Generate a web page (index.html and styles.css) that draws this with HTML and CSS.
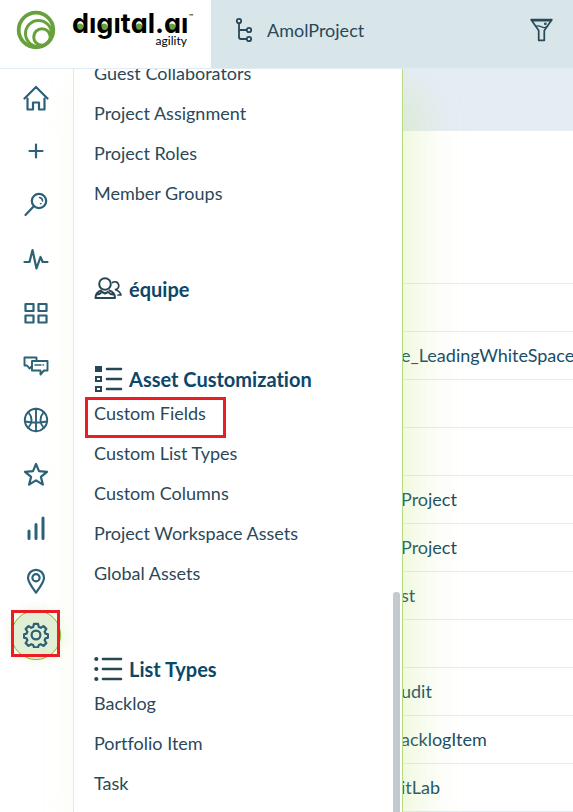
FILE: index.html
```html
<!DOCTYPE html>
<html lang="en">
<head>
<meta charset="utf-8">
<title>Digital.ai Agility</title>
<meta name="viewport" content="width=device-width, initial-scale=1">
<link rel="stylesheet" href="styles.css">
</head>
<body>
<header class="topbar">
  <a class="brand" href="#">
    <svg class="brand-mark" viewBox="0 0 40 40" width="40" height="40" fill="none" stroke="#68a13c" aria-hidden="true">
      <circle cx="20" cy="20" r="17.3" stroke-width="3.8"/>
      <circle cx="22.5" cy="23.5" r="13" stroke-width="3"/>
      <circle cx="26" cy="27" r="8.300" stroke-width="3"/>
    </svg>
    <span class="brand-name">
      <span class="word"><b>d</b>ı<b>g</b>ıt<b>a</b>l.<b>a</b>ı<small>™</small></span>
      <span class="product">agility</span>
    </span>
  </a>
  <div class="projectbar">
    <a class="project" href="#">
      <svg viewBox="0 0 18 26" width="18" height="26" fill="none" stroke="currentColor" stroke-width="1.8" aria-hidden="true">
        <circle cx="4" cy="4" r="2.2"/><circle cx="14" cy="13" r="2.2"/><circle cx="14" cy="22" r="2.2"/>
        <path d="M4 6.2V20q0 2 2 2h5.8M4 13h7.8"/>
      </svg>
      <span>AmolProject</span>
    </a>
    <button class="filter" type="button" aria-label="Filter">
      <svg viewBox="0 0 24 24" width="23" height="24" fill="none" stroke="currentColor" stroke-width="1.8" stroke-linejoin="round" aria-hidden="true">
        <path d="M1.200 1.200h21.600L14.900 12.500v10.300H9.100V12.500zM2 2.300h20"/><path d="M5.500 8.200q3-1 6.500.6t6.500-.6" stroke-width="1.300"/><circle cx="16" cy="5.600" r=".6"/>
      </svg>
    </button>
  </div>
</header>

<div class="workspace">
  <nav class="rail" aria-label="Main">
    <div class="rail-group">
      <button type="button" aria-label="Home"><svg viewBox="0 0 26 26"><path d="M1.500 13.500 13 2l11.500 11.500M4.500 13.500V24.500h5.500v-7h6v7h5.500V13.500"/></svg></button>
    </div>
    <div class="rail-group">
      <button type="button" aria-label="Add"><svg viewBox="0 0 26 26"><path d="M13 6.500v13M6.500 13h13"/></svg></button>
      <button type="button" aria-label="Search"><svg viewBox="0 0 26 26"><circle cx="16" cy="9" r="7.200"/><path d="M11 14 2.500 23"/><path d="M16.500 5.500q3 .5 3 3.500M17.500 11.700h.4" stroke-width="1.500"/></svg></button>
      <button type="button" aria-label="Activity"><svg viewBox="0 0 26 26"><path d="M1.500 16h5L9.500 4l4 18.500L17.500 11l2.200 5h4.800"/></svg></button>
      <button type="button" aria-label="Dashboards"><svg viewBox="0 0 26 26"><path d="M2.500 4h8v7h-8zM15.500 4h8v7h-8zM2.500 15.500h8v7h-8zM15.500 15.500h8v7h-8z"/></svg></button>
      <button type="button" aria-label="Conversations"><svg viewBox="0 0 26 26"><g stroke-width="1.900"><path d="M8.500 12.500l-2 2-2.500-3H1.500V3.500h12v3"/><path d="M9 7h15.500v9.500h-3.500L17.500 20.500v-4H9z"/><path d="M12 11h6M20 11h.5" stroke-width="1.400"/></g></svg></button>
    </div>
    <div class="rail-group">
      <button type="button" aria-label="Sprints"><svg viewBox="0 0 26 26"><g stroke-width="1.900"><circle cx="13" cy="13" r="11.200"/><path d="M13 1.800v22.400M2 14.500q11 2 22 0M5.300 5q6.500 8 0 16M20.700 5q-6.500 8 0 16"/></g></svg></button>
      <button type="button" aria-label="Favorites"><svg viewBox="0 0 26 26"><path d="m13 3 3 7.200 8 .6-6.100 5.100 2 7.700L13 19.400l-6.900 4.200 2-7.700L2 10.800l8-.6z"/></svg></button>
      <button type="button" aria-label="Reports"><svg viewBox="0 0 26 26"><path d="M6 16v7.500M13 9.500v14M20 3v20.500" stroke-width="3"/></svg></button>
    </div>
    <div class="rail-group">
      <button type="button" aria-label="Locations"><svg viewBox="0 0 26 26"><path d="M13 24.500C9 19 5 14.500 5 9.800a8 8 0 0 1 16 0c0 4.700-4 9.200-8 14.700z"/><circle cx="13" cy="9.800" r="3.600"/></svg></button>
      <button class="active" type="button" aria-label="Settings"><svg viewBox="0 0 26 26"><circle cx="13" cy="13" r="4.400"/><path d="M11 1.800h4l.8 3.200 1.900.8 2.800-1.700 2.800 2.800-1.700 2.800.8 1.900 2.600.7v3.400l-2.600.7-.8 1.900 1.700 2.800-2.800 2.800-2.800-1.700-1.900.8-.8 2.400h-4l-.8-2.400-1.900-.8-2.800 1.700-2.800-2.800 1.700-2.800-.8-1.900L1 15.700v-3.400l2.600-.7.8-1.900-1.700-2.800 2.800-2.800 2.800 1.700 1.900-.8z"/></svg></button>
    </div>
  </nav>

  <aside class="drawer" aria-label="Administration">
    <div class="drawer-content">
      <section>
        <ul>
          <li><a href="#">Guest Collaborators</a></li>
          <li><a href="#">Project Assignment</a></li>
          <li><a href="#">Project Roles</a></li>
          <li><a href="#">Member Groups</a></li>
        </ul>
      </section>
      <section>
        <h2>
          <svg viewBox="0 0 29 28" width="29" height="28" fill="none" stroke="#274653" stroke-width="2" stroke-linecap="round" stroke-linejoin="round" aria-hidden="true">
            <circle cx="11" cy="9" r="5.800"/><path d="M7 15.500C3 17 1.500 19.500 1.500 23h19.500c0-3.500-1.500-6-5.500-7.500M3 19.500q3 0 5-2.500l3 1.500 3-1.500q2 2.500 5 2.500"/><path d="M18.500 7.500a4 4 0 1 1 3 7.200q4.500 1.500 5.500 5.300H24" stroke-width="1.700"/>
          </svg>
          <span>équipe</span>
        </h2>
      </section>
      <section>
        <h2>
          <svg viewBox="0 0 29 28" width="29" height="28" fill="none" stroke="#274653" stroke-width="2" aria-hidden="true">
            <path d="M1 1h7v6H1z" fill="#274653" stroke="none"/><path d="M2 12h5v4H2zM2 22h5v4H2z"/><path d="M13 4h14M13 14h14M13 24h14" stroke-width="2.600" stroke-linecap="round"/>
          </svg>
          <span>Asset Customization</span>
        </h2>
        <ul>
          <li class="marked"><a href="#">Custom Fields</a></li>
          <li><a href="#">Custom List Types</a></li>
          <li><a href="#">Custom Columns</a></li>
          <li><a href="#">Project Workspace Assets</a></li>
          <li><a href="#">Global Assets</a></li>
        </ul>
      </section>
      <section>
        <h2>
          <svg viewBox="0 0 29 28" width="29" height="28" fill="none" stroke="#274653" stroke-width="2.600" stroke-linecap="round" aria-hidden="true">
            <path d="M9 4h18M9 14h18M9 24h18"/><g fill="#274653" stroke="none"><circle cx="2.300" cy="4" r="2.100"/><circle cx="2.300" cy="14" r="2.100"/><circle cx="2.300" cy="24" r="2.100"/></g>
          </svg>
          <span>List Types</span>
        </h2>
        <ul>
          <li><a href="#">Backlog</a></li>
          <li><a href="#">Portfolio Item</a></li>
          <li><a href="#">Task</a></li>
        </ul>
      </section>
    </div>
  </aside>

  <main class="page">
    <div class="page-band"></div>
    <div class="page-intro"></div>
    <ul class="rows">
      <li></li>
      <li>e_LeadingWhiteSpace</li>
      <li></li>
      <li></li>
      <li>Project</li>
      <li>Project</li>
      <li>st</li>
      <li></li>
      <li>udit</li>
      <li>acklogItem</li>
      <li>itLab</li>
    </ul>
  </main>
</div>
</body>
</html>
```
FILE: styles.css
```css
*, *::before, *::after { box-sizing: border-box; }

body {
  margin: 0;
  height: 100vh;
  overflow: hidden;
  display: flex;
  flex-direction: column;
  background: #fff;
  color: #2b4859;
  font: 18px/38px Lato, "Liberation Sans", sans-serif;
  font-variant-ligatures: none;
}

a { color: inherit; text-decoration: none; }
ul { margin: 0; padding: 0; list-style: none; }
svg { display: block; flex: none; }

button {
  padding: 0;
  border: 0;
  background: none;
  color: inherit;
  cursor: pointer;
}

.topbar {
  flex: none;
  display: flex;
  height: 69px;
  position: relative;
  z-index: 3;
  background: #fff;
  border-bottom: 1px solid #e0ebf3;
}

.brand {
  flex: none;
  display: flex;
  gap: 16px;
  width: 211px;
  padding: 10px 0 0 16px;
  color: #000;
}

.brand-name {
  display: flex;
  flex-direction: column;
  align-items: flex-end;
  white-space: nowrap;
}

.word {
  display: flex;
  font: 700 27px/28px Inter, sans-serif;
  font-feature-settings: "cv11";
}

.word b {
  font-weight: inherit;
  background: radial-gradient(circle at 47% 61%, #68a13c 3px, transparent 4px);
}

.word small { font: 6px/12px Lato, sans-serif; }

.product {
  padding-right: 6px;
  font-size: 12px;
  line-height: 6px;
}

.projectbar {
  flex: 1;
  display: flex;
  align-items: center;
  justify-content: space-between;
  padding: 0 20px 8px 24px;
  background: #d8e6ea;
  color: #284957;
}

.project {
  display: flex;
  align-items: center;
  gap: 14px;
}

.workspace {
  flex: 1;
  min-height: 0;
  display: flex;
}

.rail {
  flex: none;
  display: flex;
  flex-direction: column;
  gap: 3px;
  width: 73px;
  padding: 4px 1px 0 0;
}

.rail-group {
  display: flex;
  flex-direction: column;
  align-items: center;
  gap: 4px;
}

.rail button {
  position: relative;
  display: grid;
  place-items: center;
  width: 50px;
  height: 50px;
  border-radius: 50%;
  color: #2c6177;
}

.rail svg {
  width: 26px;
  height: 26px;
  fill: none;
  stroke: currentColor;
  stroke-width: 2.2;
  stroke-linecap: round;
  stroke-linejoin: round;
}

.rail .active {
  background: #e2efd4;
  border: 1px solid #7db928;
  box-shadow: 0 0 12px rgba(125, 185, 40, 0.2);
}

.rail .active::after {
  content: "";
  position: absolute;
  inset: -1px 0 2px -1px;
  border: 3px solid #ec1c24;
}

.drawer {
  flex: none;
  position: relative;
  z-index: 1;
  width: 330px;
  overflow: hidden;
  background: #fff;
  border-left: 1px solid #dfeaf1;
  border-right: 1px solid #b7da83;
  box-shadow: 16px 24px 40px rgba(185, 225, 100, 0.26);
}

.drawer::after {
  content: "";
  position: absolute;
  top: 523px;
  right: 2px;
  bottom: 0;
  width: 7px;
  border-radius: 3px 3px 0 0;
  background: #c3cacf;
}

.drawer-content {
  display: flex;
  flex-direction: column;
  gap: 60px;
  margin-top: -15px;
  padding: 0 20px;
}

.drawer h2 {
  display: flex;
  align-items: center;
  gap: 6px;
  height: 30px;
  margin: 0;
  color: #0b4768;
  font-size: 20px;
  font-weight: 700;
}

.drawer li {
  position: relative;
  height: 40px;
}

.marked::after {
  content: "";
  position: absolute;
  inset: 3px auto -4px -9px;
  width: 141px;
  border: 3px solid #ec1c24;
}

.page {
  flex: 1;
  min-width: 0;
  overflow: hidden;
  color: #174d69;
}

.page-band {
  height: 62px;
  background: #e5edf4;
}

.page-intro {
  height: 153px;
  border-bottom: 1px solid #e1ecef;
}

.rows li {
  height: 48px;
  margin-left: -2px;
  border-bottom: 1px solid #e1ecef;
  line-height: 46px;
  white-space: nowrap;
}
```
